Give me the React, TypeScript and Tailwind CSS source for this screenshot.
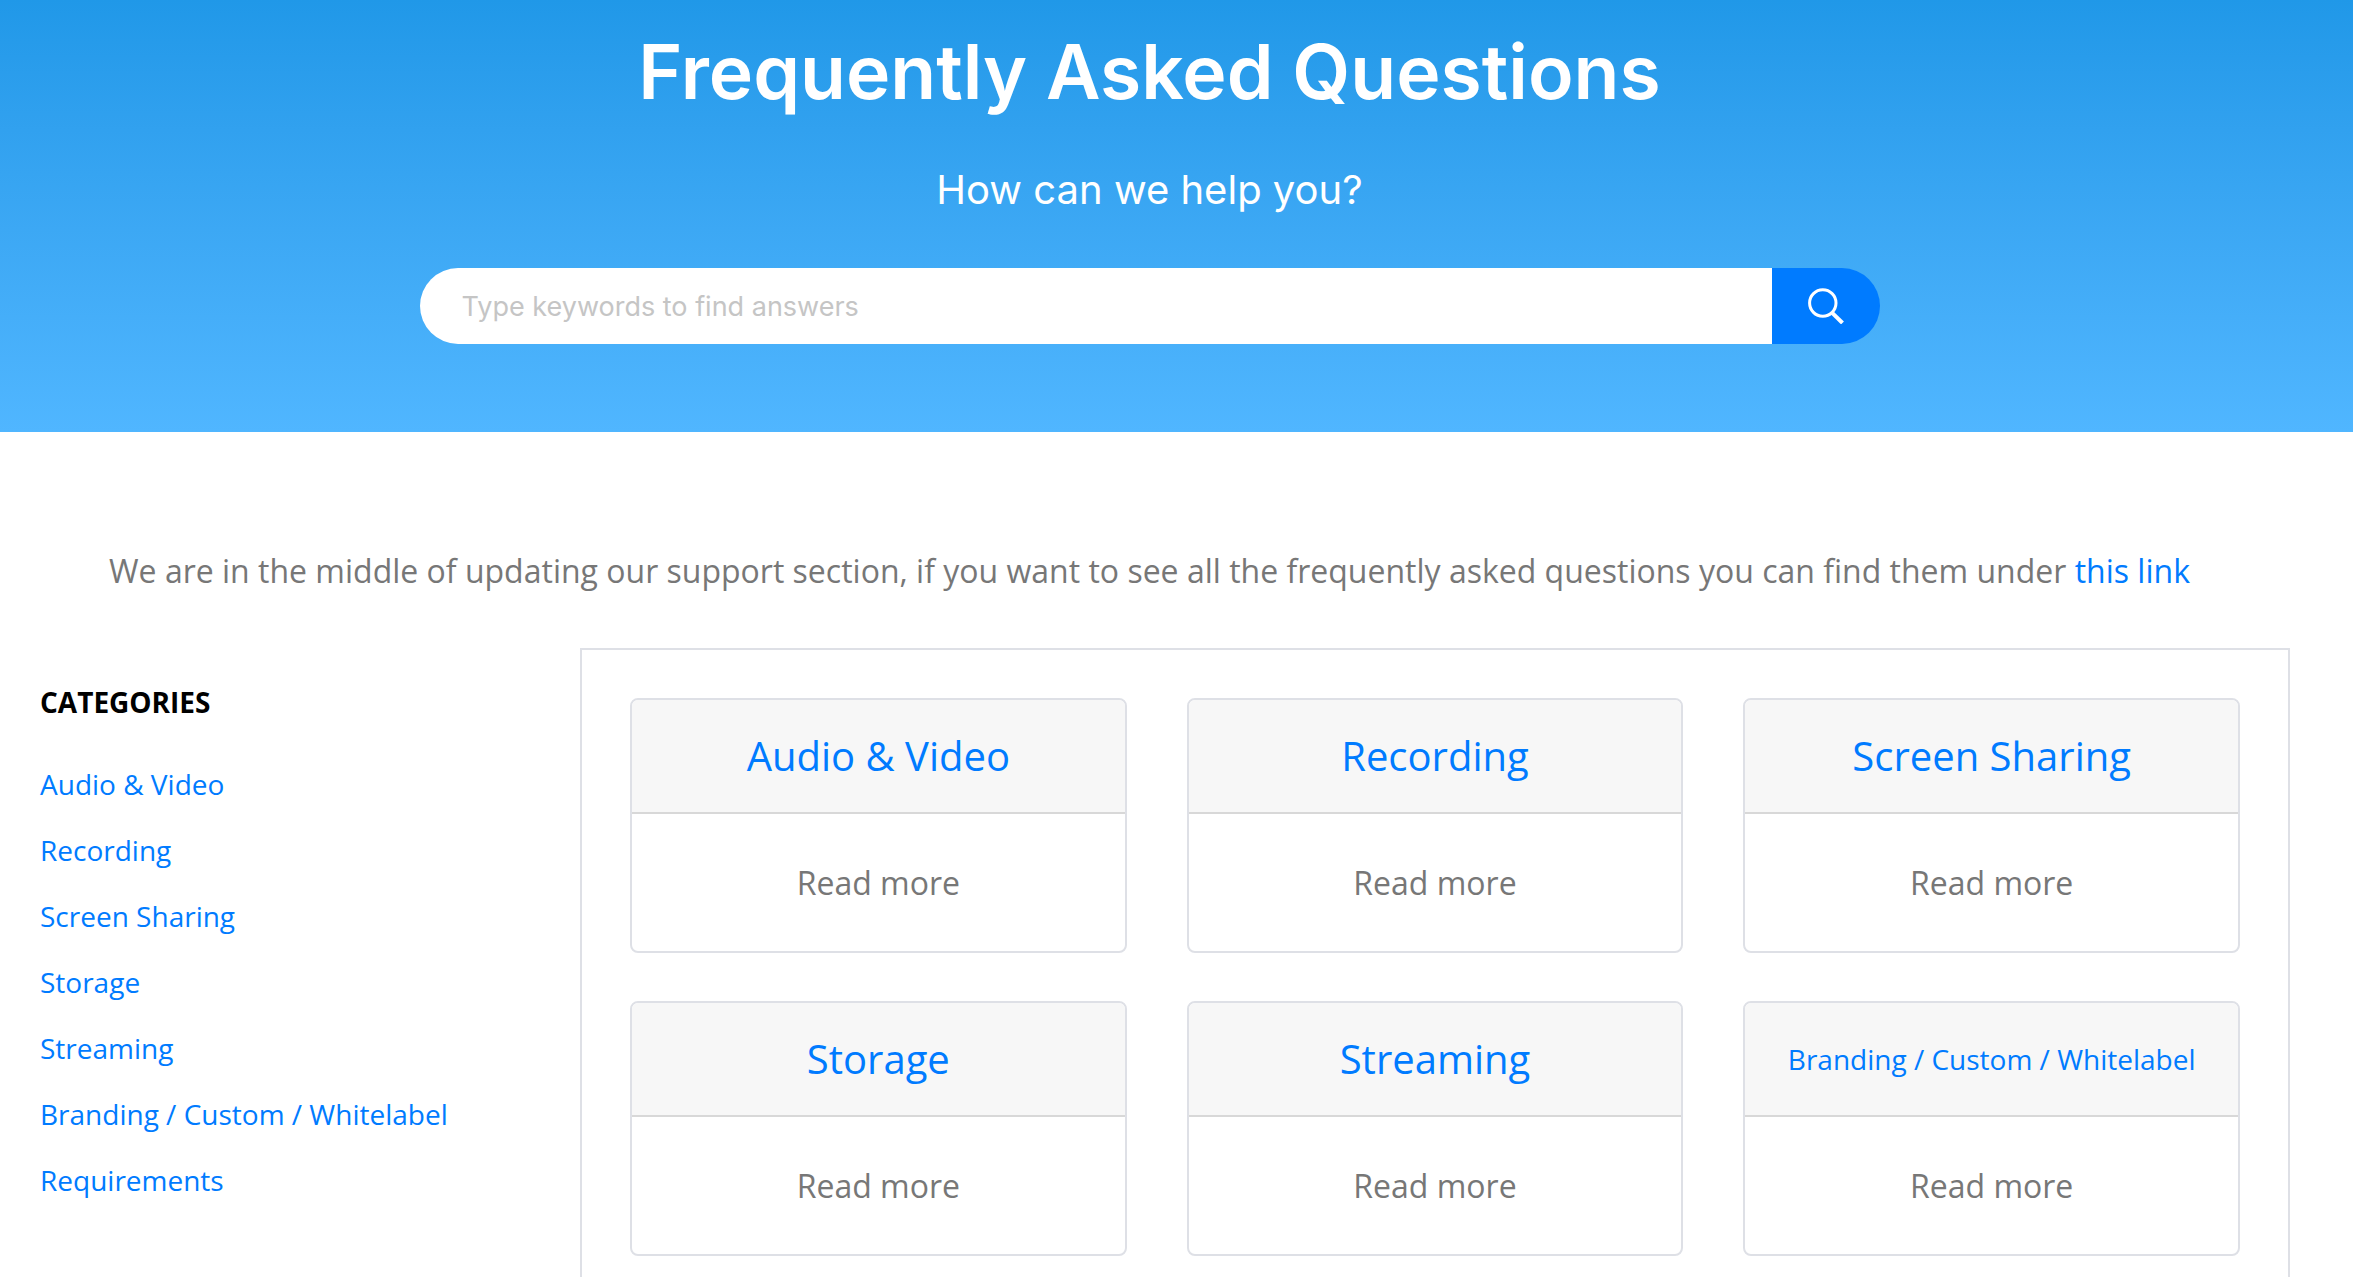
import React, { useState } from 'react';

interface Category {
  name: string;
  slug: string;
  compact?: boolean;
}

const CATEGORIES: Category[] = [
  { name: 'Audio & Video', slug: 'audio-video' },
  { name: 'Recording', slug: 'recording' },
  { name: 'Screen Sharing', slug: 'screen-sharing' },
  { name: 'Storage', slug: 'storage' },
  { name: 'Streaming', slug: 'streaming' },
  { name: 'Branding / Custom / Whitelabel', slug: 'branding', compact: true },
  { name: 'Requirements', slug: 'requirements' },
];

function SearchIcon() {
  return (
    <svg width="36" height="36" viewBox="0 0 36 36" fill="none" stroke="white" aria-hidden="true">
      <circle cx="14.8" cy="15" r="13.2" strokeWidth="3" />
      <path d="M24.2 24.8 34.5 35" strokeWidth="4" />
    </svg>
  );
}

function SearchHero() {
  const [query, setQuery] = useState('');

  return (
    <header className="flex flex-col items-center bg-gradient-to-b from-[#2098e8] to-[#50b6ff] pt-6 pr-[54px] pb-[88px] font-['Inter','Liberation_Sans',sans-serif] text-white">
      <h1 className="text-[75px] leading-[96px] font-semibold">Frequently Asked Questions</h1>
      <p className="mt-10 text-[40px] leading-[60px]">How can we help you?</p>
      <form
        className="mt-12 flex h-[76px] w-[1460px] max-w-full overflow-hidden rounded-full"
        onSubmit={e => e.preventDefault()}
      >
        <input
          type="search"
          aria-label="Search the FAQ"
          value={query}
          onChange={e => setQuery(e.target.value)}
          placeholder="Type keywords to find answers"
          className="min-w-0 flex-1 bg-white px-[42px] pt-0.5 text-[27px] text-[#333333] outline-none placeholder:text-[#c5c5c5]"
        />
        <button
          type="submit"
          aria-label="Search"
          className="flex w-[108px] items-center justify-center bg-[#007bff]"
        >
          <SearchIcon />
        </button>
      </form>
    </header>
  );
}

function CategoryCard({ category }: { category: Category }) {
  return (
    <article className="overflow-hidden rounded-lg border-2 border-[#dee0e6] bg-white text-center">
      <h3
        className={`flex h-[114px] items-center justify-center border-b-2 border-[#d8d8d8] bg-[#f7f7f7] ${
          category.compact ? 'text-[28px]' : 'text-[40px]'
        }`}
      >
        <a href={`#${category.slug}`} className="text-[#007bff]">{category.name}</a>
      </h3>
      <div className="flex h-[137px] items-center justify-center">
        <a href={`#${category.slug}`} className="text-[32px] text-[#777777]">Read more</a>
      </div>
    </article>
  );
}

export default function App() {
  return (
    <div className="flex min-h-screen flex-col bg-white font-['Open_Sans','Liberation_Sans',sans-serif]">
      <SearchHero />

      <main className="flex flex-1 flex-col">
        <p className="mt-[115px] pr-[54px] text-center text-[32px] leading-[48px] text-[#777777]">
          We are in the middle of updating our support section, if you want to see all the frequently
          asked questions you can find them under{' '}
          <a href="#all" className="text-[#007bff]">this link</a>
        </p>

        <div className="mt-[53px] flex flex-1 pr-[63px] pl-10">
          {/* Sidebar */}
          <nav aria-labelledby="categories" className="w-[540px] shrink-0 pt-8">
            <h2 id="categories" className="text-[28px] leading-[45px] font-bold text-black">
              CATEGORIES
            </h2>
            <ul className="mt-[26px] text-[28px]">
              {CATEGORIES.map(c => (
                <li key={c.slug} className="flex h-[66px] items-center">
                  <a href={`#${c.slug}`} className="text-[#007bff]">{c.name}</a>
                </li>
              ))}
            </ul>
          </nav>

          {/* Cards */}
          <section className="grid flex-1 grid-cols-3 content-start gap-x-[60px] gap-y-12 border-2 border-b-0 border-[#dee0e6] px-12 pt-12">
            {CATEGORIES.slice(0, 6).map(c => (
              <CategoryCard key={c.slug} category={c} />
            ))}
          </section>
        </div>
      </main>
    </div>
  );
}
